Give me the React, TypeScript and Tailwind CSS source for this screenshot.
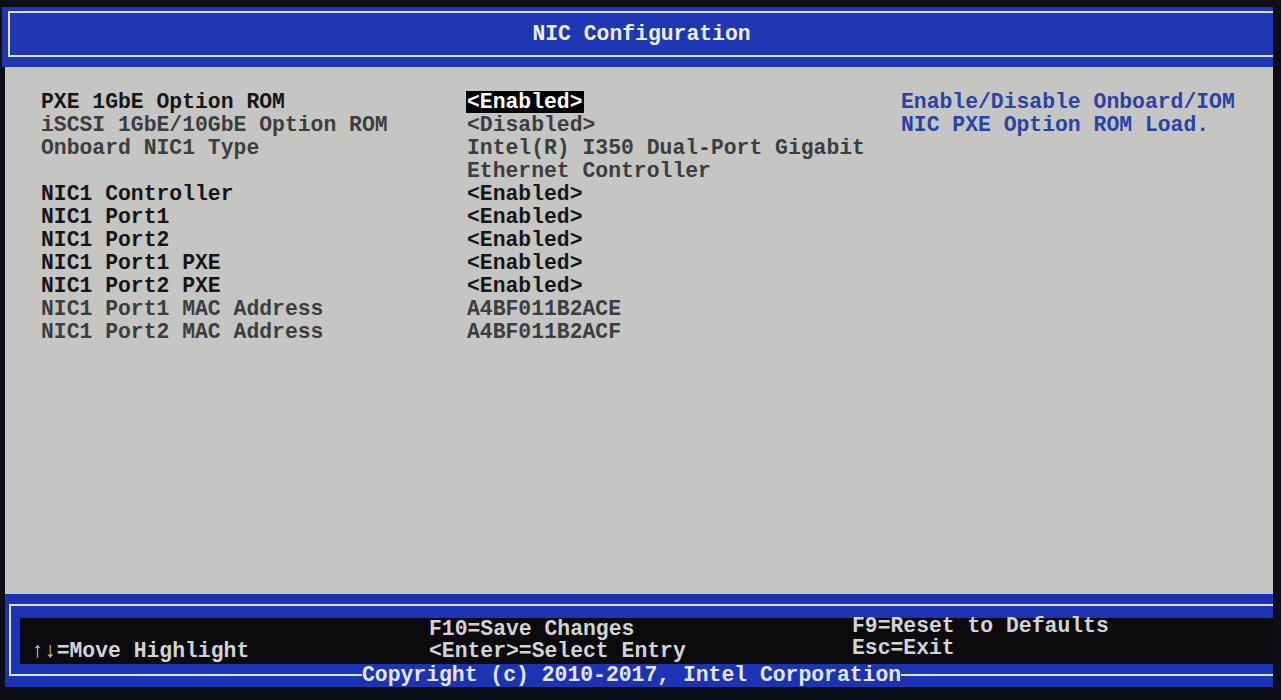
const rows: { label: string; value: string[]; dim?: boolean; selected?: boolean }[] = [
  { label: "PXE 1GbE Option ROM", value: ["<Enabled>"], selected: true },
  { label: "iSCSI 1GbE/10GbE Option ROM", value: ["<Disabled>"], dim: true },
  {
    label: "Onboard NIC1 Type",
    value: ["Intel(R) I350 Dual-Port Gigabit", "Ethernet Controller"],
    dim: true,
  },
  { label: "NIC1 Controller", value: ["<Enabled>"] },
  { label: "NIC1 Port1", value: ["<Enabled>"] },
  { label: "NIC1 Port2", value: ["<Enabled>"] },
  { label: "NIC1 Port1 PXE", value: ["<Enabled>"] },
  { label: "NIC1 Port2 PXE", value: ["<Enabled>"] },
  { label: "NIC1 Port1 MAC Address", value: ["A4BF011B2ACE"], dim: true },
  { label: "NIC1 Port2 MAC Address", value: ["A4BF011B2ACF"], dim: true },
];

export default function App() {
  return (
    <div
      className="w-[1281px] h-[700px] bg-[#0e0f16] overflow-hidden flex flex-col text-[21.4px] leading-[23px] font-bold whitespace-pre"
      style={{ fontFamily: '"Liberation Mono", "DejaVu Sans Mono", monospace' }}
    >
      {/* Title bar */}
      <header className="mt-[7px] ml-[2px] mr-[8px] h-[60px] bg-[#1f37b2] pt-[4px] pl-[6px]">
        <div className="h-[46px] border-2 border-r-0 border-[#dde2f2] flex items-center justify-center text-[#eef0f8]">
          NIC Configuration
        </div>
      </header>

      {/* Settings area */}
      <main className="flex-1 ml-[5px] mr-[8px] bg-[#c5c6c4] flex pt-[24px] pl-[36px]">
        <div className="flex flex-col">
          {rows.map((r) => (
            <div key={r.label} className="flex">
              <div className={`w-[426px] ${r.dim ? "text-[#3c3d40]" : "text-[#161618]"}`}>{r.label}</div>
              <div className={`w-[434px] flex flex-col ${r.dim ? "text-[#3c3d40]" : "text-[#161618]"}`}>
                {r.value.map((v) =>
                  r.selected ? (
                    <div key={v}>
                      <span className="inline-block -ml-px px-px h-[22px] leading-[22px] bg-black text-white">{v}</span>
                    </div>
                  ) : (
                    <div key={v}>{v}</div>
                  )
                )}
              </div>
            </div>
          ))}
        </div>
        <div className="flex flex-col text-[#2a42a6]">
          <div>Enable/Disable Onboard/IOM</div>
          <div>NIC PXE Option ROM Load.</div>
        </div>
      </main>

      {/* Key help footer */}
      <footer className="ml-[5px] mr-[8px] h-[93px] bg-[#1c34b4] pt-[10px] pl-[4px] mb-[13px] flex flex-col">
        <div className="border-t-2 border-l-2 border-[#dde2f2] pt-[12px] pl-[9px] flex flex-col">
          <div className="h-[46px] bg-[#0b0b0e] grid grid-cols-[398px_423px_1fr] pl-[11px] leading-[22px] text-[#d2d3d6]">
            <div className="flex flex-col justify-end pb-[2px]">↑↓=Move Highlight</div>
            <div className="flex flex-col">
              <div>F10=Save Changes</div>
              <div>{"<Enter>=Select Entry"}</div>
            </div>
            <div className="flex flex-col -mt-[3px]">
              <div>F9=Reset to Defaults</div>
              <div>Esc=Exit</div>
            </div>
          </div>
        </div>
        <div className="flex-1 flex items-start">
          <div className="w-[353px] h-[12px] border-l-2 border-b-2 border-[#dde2f2]" />
          <div className="text-[#e4e6ee] leading-[18px] mt-[2px]">Copyright (c) 2010-2017, Intel Corporation</div>
          <div className="flex-1 h-[2px] mt-[10px] bg-[#dde2f2]" />
        </div>
      </footer>
    </div>
  );
}
